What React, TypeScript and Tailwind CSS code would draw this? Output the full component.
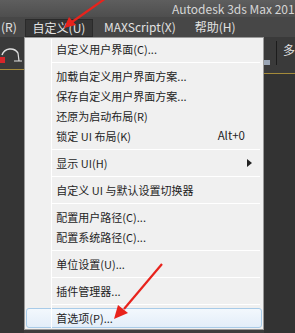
import { ReactNode } from 'react';

type Item =
  | { kind: 'sep' }
  | { kind: 'item'; label: string; shortcut?: string; submenu?: boolean; active?: boolean };

const items: Item[] = [
  { kind: 'item', label: '自定义用户界面(C)...' },
  { kind: 'sep' },
  { kind: 'item', label: '加载自定义用户界面方案...' },
  { kind: 'item', label: '保存自定义用户界面方案...' },
  { kind: 'item', label: '还原为启动布局(R)' },
  { kind: 'item', label: '锁定 UI 布局(K)', shortcut: 'Alt+0' },
  { kind: 'sep' },
  { kind: 'item', label: '显示 UI(H)', submenu: true },
  { kind: 'sep' },
  { kind: 'item', label: '自定义 UI 与默认设置切换器' },
  { kind: 'sep' },
  { kind: 'item', label: '配置用户路径(C)...' },
  { kind: 'item', label: '配置系统路径(C)...' },
  { kind: 'sep' },
  { kind: 'item', label: '单位设置(U)...' },
  { kind: 'sep' },
  { kind: 'item', label: '插件管理器...' },
  { kind: 'sep' },
  { kind: 'item', label: '首选项(P)...', active: true },
];

const font = { fontFamily: '"Noto Sans CJK SC", "Noto Sans", sans-serif' };

function MenuRow({ item }: { item: Item }): ReactNode {
  if (item.kind === 'sep') {
    return (
      <div className="h-[7px] flex items-center pl-[27px] pr-[3px]">
        <div className="h-px w-full bg-[#dcdcdc] border-b border-white" />
      </div>
    );
  }
  return (
    <div
      className={`h-[20px] flex items-center justify-between pl-[29px] pr-[9px] text-[11px] text-[#1e1e1e] ${
        item.active
          ? 'mx-[1px] rounded-[3px] border border-[#a8cbe8] bg-gradient-to-b from-[#f3f8fd] to-[#e3eef9]'
          : 'border border-transparent mx-[1px]'
      }`}
    >
      <span>{item.label}</span>
      {item.shortcut && <span className="mr-[7px] text-[11.5px]">{item.shortcut}</span>}
      {item.submenu && (
        <svg width="5" height="8" viewBox="0 0 5 8">
          <path d="M0 0 L5 4 L0 8 Z" fill="#222" />
        </svg>
      )}
    </div>
  );
}

export default function App() {
  return (
    <div className="relative w-[295px] h-[333px] overflow-hidden bg-[#3d3d3d] flex flex-col" style={font}>
      {/* title bar */}
      <div className="h-[17px] bg-gradient-to-b from-[#5e5e5e] to-[#4e4e4e] flex items-center pl-[172px]">
        <span className="text-[12px] leading-none text-[#d6d6d6] whitespace-nowrap">
          Autodesk 3ds Max 201
        </span>
      </div>

      {/* menu bar */}
      <div className="h-[20px] bg-[#474747] flex items-center text-[12px] text-[#e2e2e2]">
        <span className="w-[25px] pl-[1px]">(R)</span>
        <span className="h-[18px] mt-[2px] w-[68px] flex items-center justify-center bg-[#363636] border border-[#2a2a2a]">
          自定义(U)
        </span>
        <span className="ml-[11px]">MAXScript(X)</span>
        <span className="ml-[19px]">帮助(H)</span>
      </div>

      <div className="flex flex-1">
        {/* left toolbar strip */}
        <div className="w-[25px] flex flex-col bg-[#3a3a3a]">
          <div className="h-[32px] relative">
            <svg width="25" height="30" viewBox="0 0 25 30" className="absolute top-[2px] left-0">
              <path d="M2 16 A9 9 0 0 1 18 14" stroke="#e0e0e0" strokeWidth="1.5" fill="none" />
              <path d="M18 14 L19 22 M14 22 L22 22" stroke="#e0e0e0" strokeWidth="1.2" />
              <rect x="0" y="18" width="5" height="6" fill="#d8262a" />
            </svg>
          </div>
          <div className="h-px bg-[#a48a3a]" />
          <div className="flex-1 bg-[#353535]" />
        </div>

        {/* dropdown menu */}
        <div className="w-[246px] h-[293px] bg-[#f0f0f0] border border-[#9a9a9a] pt-[1px] relative">
          <div className="absolute left-[26px] top-[1px] bottom-[1px] w-px bg-[#e2e2e2] border-r border-white" />
          {items.map((it, i) => (
            <MenuRow key={i} item={it} />
          ))}
        </div>

        {/* right side */}
        <div className="flex-1 flex flex-col bg-[#3a3a3a]">
          <div className="h-[36px] flex">
            <div className="w-[8px] flex flex-col justify-end pb-[8px]">
              <div className="w-[6px] h-[5px] bg-[#9aa5b5]" />
            </div>
            <div className="w-px h-[24px] mt-[4px] ml-[4px] bg-[#1c1c1c]" />
            <div className="ml-[6px] mt-[4px] text-[12px] text-[#e0e0e0]">多</div>
          </div>
          <div className="h-px bg-[#a48a3a]" />
          <div className="flex-1 bg-[#333333]" />
        </div>
      </div>

      {/* red annotation arrows */}
      <svg width="295" height="333" className="absolute inset-0 pointer-events-none">
        <line x1="106" y1="-2" x2="72" y2="22" stroke="#e8231c" strokeWidth="2.2" />
        <path d="M64 28 L69 17 L76 25 Z" fill="#e8231c" />
        <line x1="162" y1="264" x2="124" y2="309" stroke="#e8231c" strokeWidth="2.2" />
        <path d="M114 319 L118 305 L128 313 Z" fill="#e8231c" />
      </svg>
    </div>
  );
}
